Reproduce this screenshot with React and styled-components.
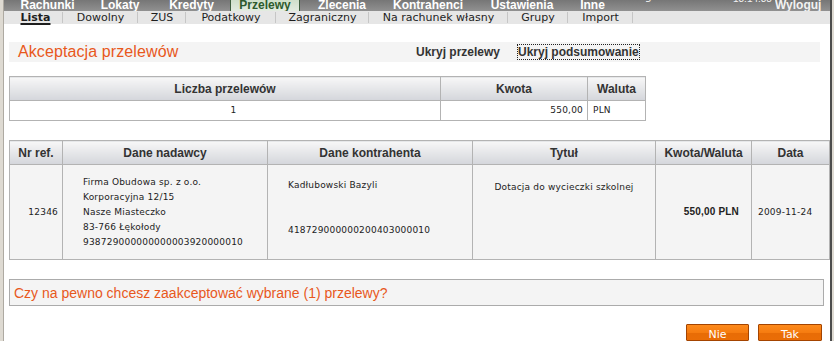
import React from 'react';
import styled, { createGlobalStyle } from 'styled-components';

const Global = createGlobalStyle`
  html, body { margin: 0; padding: 0; background: #fff; }
  body { font-family: "DejaVu Sans", Verdana, sans-serif; }
`;

const Outer = styled.div`
  width: 834px;
  height: 341px;
  box-sizing: border-box;
  overflow: hidden;
  border-left: 3px solid #dedad2;
  border-right: 2px solid #dedad2;
  display: flex;
  background: #fff;
`;

const Inner = styled.div`
  flex: 1;
  min-width: 0;
  border-left: 1px solid #aeaaa2;
  border-right: 2px solid #4c4c4c;
  display: flex;
  flex-direction: column;
`;

const TopBar = styled.div`
  height: 14px;
  display: flex;
  overflow: hidden;
  padding-left: 4px;
  background: linear-gradient(to bottom, #767676 0, #939393 12px, #3e5e3e 12px, #3e5e3e 14px);
`;

const Tab = styled.div`
  width: ${(p) => p.$w}px;
  height: ${(p) => (p.$active ? 14 : 12)}px;
  box-sizing: border-box;
  flex: none;
  overflow: hidden;
  text-align: center;
  font: bold 12px "Liberation Sans", Arial, sans-serif;
  line-height: 12px;
  color: ${(p) => (p.$active ? '#2d5a2d' : '#ffffff')};
  background: ${(p) => (p.$active ? 'linear-gradient(#cfdfca, #e8efe6)' : 'transparent')};
  border-left: ${(p) => (p.$active ? '1px solid #3e5e3e' : 'none')};
  border-right: ${(p) => (p.$active ? '1px solid #3e5e3e' : 'none')};
`;

const TabText = styled.span`
  display: block;
  margin-top: -1px;
`;

const TopInfo = styled.div`
  width: ${(p) => p.$w}px;
  flex: none;
  height: 12px;
  overflow: hidden;
  color: #f2f2f2;
  margin-left: ${(p) => p.$ml || 0}px;
`;

const InfoText = styled.span`
  display: block;
  white-space: nowrap;
  margin-top: ${(p) => p.$shift}px;
  font: ${(p) => p.$font};
  line-height: 12px;
`;

const SubNav = styled.div`
  height: 18px;
  display: flex;
  padding-left: 4px;
  background: #e6e6e6;
`;

const SubItem = styled.div`
  width: ${(p) => p.$w}px;
  flex: none;
  box-sizing: border-box;
  display: flex;
  align-items: center;
  justify-content: center;
  position: relative;
  font-family: "DejaVu Sans", Verdana, sans-serif;
  font-size: 11px;
  font-weight: ${(p) => (p.$active ? 'bold' : 'normal')};
  color: #1e1e1e;
  text-decoration: ${(p) => (p.$active ? 'underline' : 'none')};
  text-decoration-thickness: 2px;
  text-underline-offset: 2px;
  &::after {
    content: '';
    position: absolute;
    right: 0;
    top: 1px;
    bottom: 1px;
    width: 1px;
    background: #c6c6c6;
  }
`;

const Content = styled.div`
  display: flex;
  flex-direction: column;
  padding: 18px 0 0 5px;
`;

const TitleBand = styled.div`
  width: 811px;
  height: 20px;
  background: #f4f4f4;
  display: flex;
  align-items: center;
`;

const Title = styled.div`
  width: 407px;
  flex: none;
  box-sizing: border-box;
  padding-left: 9px;
  font: 16px "Liberation Sans", Arial, sans-serif;
  letter-spacing: 0.1px;
  color: #e8581c;
`;

const ToggleLink = styled.span`
  flex: none;
  width: ${(p) => (p.$w ? `${p.$w}px` : 'auto')};
  font: bold 12px "Liberation Sans", Arial, sans-serif;
  color: #333;
  line-height: 14px;
  border: 1px dotted ${(p) => (p.$focus ? '#222' : 'transparent')};
  margin-left: ${(p) => (p.$focus ? 0 : -1)}px;
`;

const Table = styled.table`
  border-collapse: collapse;
  table-layout: fixed;
  width: ${(p) => p.$w}px;
  margin-top: ${(p) => p.$mt}px;
`;

const Th = styled.th`
  height: 23px;
  padding: 0;
  border: 1px solid #b3b3b3;
  background: linear-gradient(#f7f7f7, #d4d6db);
  font: bold 12px "Liberation Sans", Arial, sans-serif;
  color: #333;
  text-align: center;
  vertical-align: middle;
`;

const Td = styled.td`
  height: ${(p) => p.$h}px;
  border: 1px solid #b3b3b3;
  background: ${(p) => p.$bg || '#fff'};
  font-family: "DejaVu Sans", Verdana, sans-serif;
  font-size: 9px;
  letter-spacing: 0.2px;
  line-height: 15px;
  color: #222;
  text-align: ${(p) => p.$align || 'left'};
  vertical-align: ${(p) => p.$valign || 'middle'};
  padding: ${(p) => p.$pad || '0'};
  white-space: nowrap;
`;

const AmountStrong = styled.b`
  font: bold 10px "Liberation Sans", Arial, sans-serif;
  letter-spacing: 0.2px;
  color: #222;
`;

const Line = styled.div`
  margin-top: ${(p) => p.$mt || 0}px;
`;

const Question = styled.div`
  width: 815px;
  height: 27px;
  box-sizing: border-box;
  margin-top: 19px;
  border: 1px solid #ababab;
  background: #f4f4f4;
  padding-left: 4px;
  display: flex;
  align-items: center;
  font: 14px "Liberation Sans", Arial, sans-serif;
  color: #e8581c;
`;

const ButtonRow = styled.div`
  display: flex;
  justify-content: flex-end;
  gap: 9px;
  margin-top: 18px;
  padding-right: 8px;
`;

const Button = styled.button`
  width: ${(p) => p.$w}px;
  height: 17px;
  box-sizing: border-box;
  margin: 0;
  padding: 3px 0 0;
  border: 1px solid #a44400;
  border-radius: 1px;
  background: linear-gradient(#fd8a1c 0, #f67c10 50%, #e86c06 55%, #ea6d06 100%);
  color: #fff;
  font: 11px "DejaVu Sans", Verdana, sans-serif;
  line-height: 13px;
  text-align: center;
  cursor: pointer;
`;

const tabs = [
  ['Rachunki', 79],
  ['Lokaty', 66],
  ['Kredyty', 77],
  ['Przelewy', 70, true],
  ['Zlecenia', 84],
  ['Kontrahenci', 88],
  ['Ustawienia', 100],
  ['Inne', 41],
];

const subs = [
  ['Lista', 55, true],
  ['Dowolny', 75],
  ['ZUS', 48],
  ['Podatkowy', 90],
  ['Zagraniczny', 93],
  ['Na rachunek własny', 139],
  ['Grupy', 60],
  ['Import', 65],
];

export default function App() {
  return (
    <>
      <Global />
      <Outer>
        <Inner>
          <TopBar>
            {tabs.map(([label, w, active]) => (
              <Tab key={label} $w={w} $active={active}>
                <TabText>{label}</TabText>
              </Tab>
            ))}
            <TopInfo $w={98} $ml={22}>
              <InfoText $shift={-9} $font={'11px "DejaVu Sans", Verdana, sans-serif'}>logowanie:</InfoText>
            </TopInfo>
            <TopInfo $w={42}>
              <InfoText $shift={-7} $font={'10px "Liberation Sans", Arial, sans-serif'}>13:14:38</InfoText>
            </TopInfo>
            <TopInfo $w={50}>
              <InfoText $shift={-1} $font={'bold 12px "Liberation Sans", Arial, sans-serif'}>Wyloguj</InfoText>
            </TopInfo>
          </TopBar>
          <SubNav>
            {subs.map(([label, w, active]) => (
              <SubItem key={label} $w={w} $active={active}>{label}</SubItem>
            ))}
          </SubNav>
          <Content>
            <TitleBand>
              <Title>Akceptacja przelewów</Title>
              <ToggleLink $w={100}>Ukryj przelewy</ToggleLink>
              <ToggleLink $focus>Ukryj podsumowanie</ToggleLink>
            </TitleBand>

            <Table $w={636} $mt={14}>
              <colgroup>
                <col width="431" />
                <col width="147" />
                <col width="58" />
              </colgroup>
              <thead>
                <tr>
                  <Th>Liczba przelewów</Th>
                  <Th>Kwota</Th>
                  <Th>Waluta</Th>
                </tr>
              </thead>
              <tbody>
                <tr>
                  <Td $h={19} $align="center" $pad="0 0 0 17px">1</Td>
                  <Td $h={19} $align="right" $pad="0 4px 0 0">550,00</Td>
                  <Td $h={19} $pad="0 0 0 5px">PLN</Td>
                </tr>
              </tbody>
            </Table>

            <Table $w={820} $mt={19}>
              <colgroup>
                <col width="53" />
                <col width="205" />
                <col width="205" />
                <col width="183" />
                <col width="96" />
                <col width="78" />
              </colgroup>
              <thead>
                <tr>
                  <Th>Nr ref.</Th>
                  <Th>Dane nadawcy</Th>
                  <Th>Dane kontrahenta</Th>
                  <Th>Tytuł</Th>
                  <Th>Kwota/Waluta</Th>
                  <Th>Data</Th>
                </tr>
              </thead>
              <tbody>
                <tr>
                  <Td $h={79} $bg="#f4f4f4" $align="right" $pad="0 4px 0 0">12346</Td>
                  <Td $h={79} $bg="#f4f4f4" $pad="0 0 0 20px">
                    <Line>Firma Obudowa sp. z o.o.</Line>
                    <Line>Korporacyjna 12/15</Line>
                    <Line>Nasze Miasteczko</Line>
                    <Line>83-766 Łękołody</Line>
                    <Line>938729000000000003920000010</Line>
                  </Td>
                  <Td $h={79} $bg="#f4f4f4" $valign="top" $pad="13px 0 0 20px">
                    <Line>Kadłubowski Bazyli</Line>
                    <Line $mt={30}>418729000000200403000010</Line>
                  </Td>
                  <Td $h={79} $bg="#f4f4f4" $valign="top" $align="center" $pad="15px 0 0 0">
                    Dotacja do wycieczki szkolnej
                  </Td>
                  <Td $h={79} $bg="#f4f4f4" $align="right" $pad="0 12px 0 0">
                    <AmountStrong>550,00 PLN</AmountStrong>
                  </Td>
                  <Td $h={79} $bg="#f4f4f4" $pad="0 0 0 6px">2009-11-24</Td>
                </tr>
              </tbody>
            </Table>

            <Question>Czy na pewno chcesz zaakceptować wybrane (1) przelewy?</Question>

            <ButtonRow>
              <Button $w={63}>Nie</Button>
              <Button $w={64}>Tak</Button>
            </ButtonRow>
          </Content>
        </Inner>
      </Outer>
    </>
  );
}
